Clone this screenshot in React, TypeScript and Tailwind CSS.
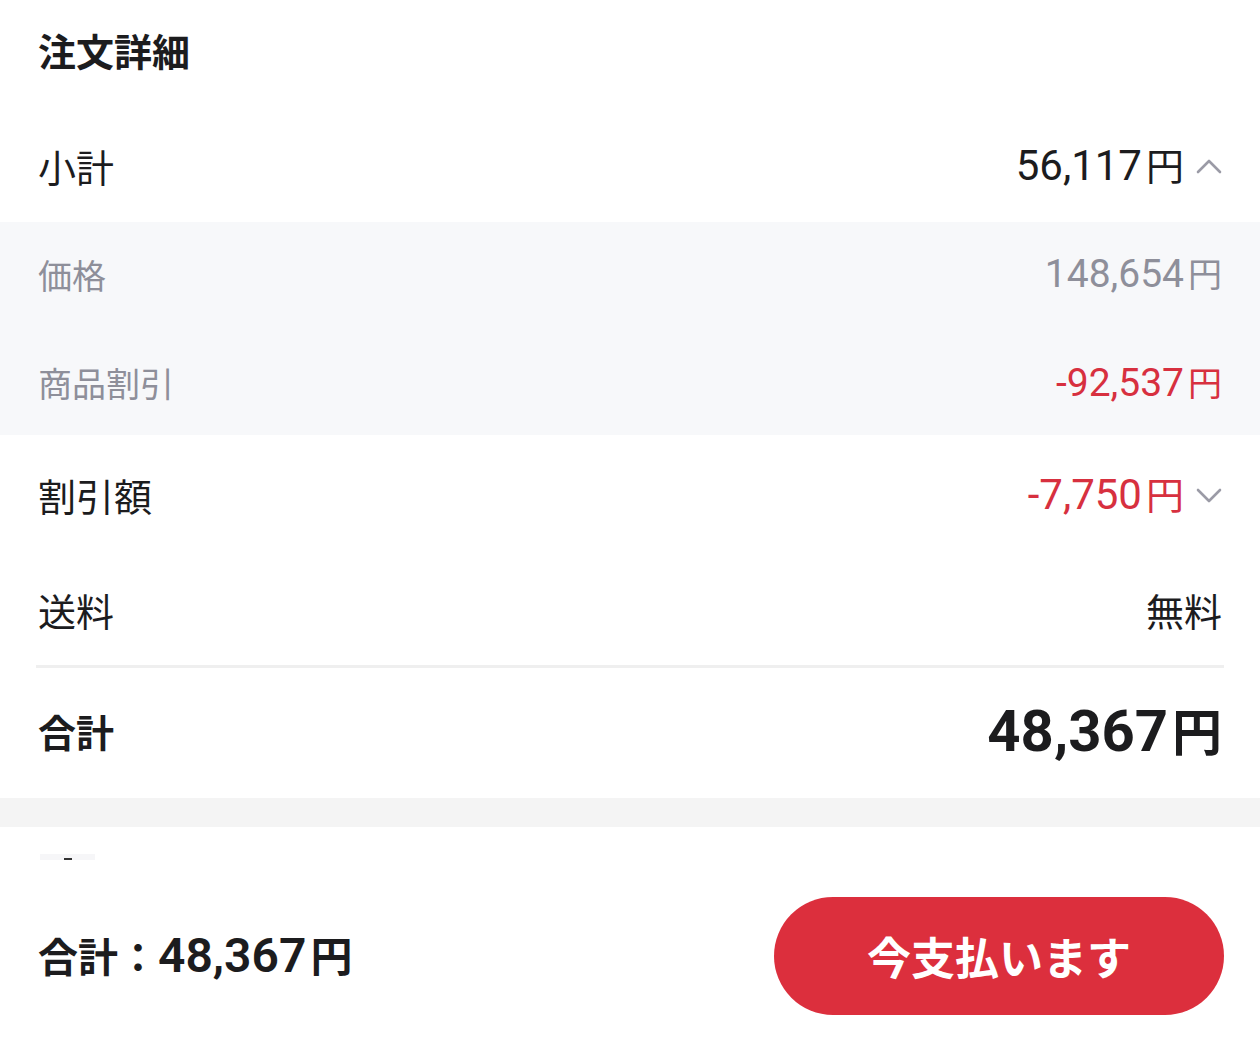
const num = "font-['Roboto','Noto_Sans_CJK_JP',sans-serif]";

const Chevron = ({ up }: { up?: boolean }) => (
  <svg width="26" height="16" viewBox="0 0 26 16" fill="none" className="ml-[12px] shrink-0">
    <path
      d={up ? 'M2 14 L13 3 L24 14' : 'M2 3 L13 14 L24 3'}
      stroke="#9b9ba6"
      strokeWidth="2.6"
      strokeLinecap="round"
      strokeLinejoin="round"
    />
  </svg>
);

const Yen = ({ value, size, yen, className = '' }: { value: string; size: string; yen: string; className?: string }) => (
  <span className={`flex items-baseline ${className}`}>
    <span className={`${num} ${size}`}>{value}</span>
    <span className={`${yen} ml-[4px]`}>円</span>
  </span>
);

export default function App() {
  return (
    <div className="w-[1260px] h-[1052px] bg-white text-[#1c1c1e] font-['Noto_Sans_CJK_JP',sans-serif] flex flex-col overflow-hidden">
      {/* 注文詳細 */}
      <div className="h-[110px] px-[38px] flex items-center pb-[10px]">
        <h1 className="text-[38px] font-bold leading-none">注文詳細</h1>
      </div>

      <div className="h-[112px] px-[38px] flex items-center justify-between">
        <span className="text-[38px] leading-none">小計</span>
        <div className="flex items-center">
          <Yen value="56,117" size="text-[42px] leading-none" yen="text-[38px] leading-none" />
          <Chevron up />
        </div>
      </div>

      {/* breakdown */}
      <div className="bg-[#f7f8fa] text-[#8e8f9a]">
        <div className="h-[107px] px-[38px] flex items-center justify-between pb-[2px]">
          <span className="text-[34px] leading-none">価格</span>
          <Yen value="148,654" size="text-[39px] leading-none" yen="text-[34px] leading-none" />
        </div>
        <div className="h-[106px] px-[38px] flex items-center justify-between pt-[2px]">
          <span className="text-[34px] leading-none">商品割引</span>
          <Yen value="-92,537" size="text-[39px] leading-none" yen="text-[34px] leading-none" className="text-[#d7303f]" />
        </div>
      </div>

      <div className="h-[120px] px-[38px] flex items-center justify-between">
        <span className="text-[38px] leading-none">割引額</span>
        <div className="flex items-center">
          <Yen value="-7,750" size="text-[42px] leading-none" yen="text-[38px] leading-none" className="text-[#d7303f]" />
          <Chevron />
        </div>
      </div>

      <div className="h-[110px] px-[38px] flex items-center justify-between">
        <span className="text-[38px] leading-none">送料</span>
        <span className="text-[38px] leading-none">無料</span>
      </div>

      <div className="mx-[36px] h-[3px] bg-[#efefef]" />

      <div className="h-[130px] px-[38px] flex items-center justify-between pb-[4px]">
        <span className="text-[38px] font-bold leading-none">合計</span>
        <Yen value="48,367" size="text-[58px] font-bold leading-none" yen="text-[50px] font-bold leading-none" />
      </div>

      <div className="h-[29px] bg-[#f4f4f4]" />

      {/* content peeking under the bottom bar */}
      <div className="h-[35px] mx-[40px] flex items-end pb-[2px]">
        <div className="w-[55px] h-[6px] bg-[#f6f6f8] flex justify-center items-end">
          <div className="w-[8px] h-[2px] bg-[#333]" />
        </div>
      </div>

      {/* bottom bar */}
      <div className="flex-1 pl-[38px] pr-[36px] flex items-center justify-between pb-[2px]">
        <div className="flex items-baseline font-bold">
          <span className="text-[40px] leading-none">合計：</span>
          <Yen value="48,367" size="text-[48px] font-semibold leading-none" yen="text-[42px] font-bold leading-none" />
        </div>
        <button className="w-[450px] h-[118px] rounded-full bg-[#dc2f3d] text-white text-[44px] font-bold leading-none flex items-center justify-center">
          今支払います
        </button>
      </div>
    </div>
  );
}
